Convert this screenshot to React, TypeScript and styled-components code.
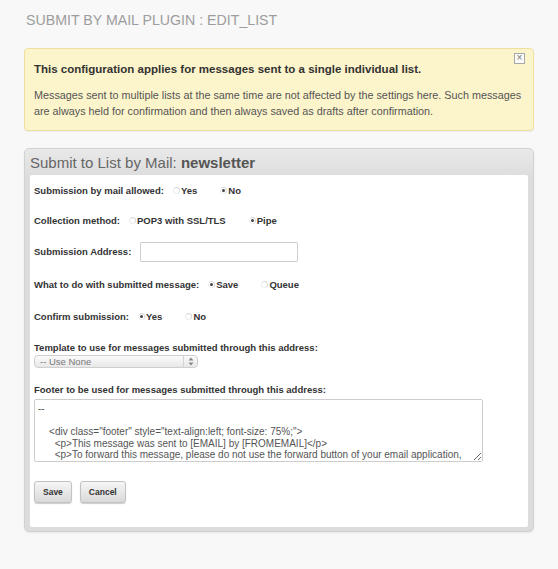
import React from 'react';
import styled, { createGlobalStyle } from 'styled-components';

const GlobalStyle = createGlobalStyle`
  html, body {
    margin: 0;
    padding: 0;
    background: #f8f8f8;
    font-family: "Liberation Sans", Arial, Helvetica, sans-serif;
  }
`;

const footerText = `--

    <div class="footer" style="text-align:left; font-size: 75%;">
      <p>This message was sent to [EMAIL] by [FROMEMAIL]</p>
      <p>To forward this message, please do not use the forward button of your email application,
because this message was made specifically for you only. Instead use the <a href="[FORWARDURL]">forward page</a>
      in our newsletter system.<br/>`;

interface IRadioProps {
  label: string,
  checked?: boolean
}

// Components
const RadioOption: React.FC<IRadioProps> = ({ label, checked }) => (
  <Option>
    <RadioDot checked={!!checked} />
    {label}
  </Option>
);

const App: React.FC = () => {
  return (
    <>
      <GlobalStyle />
      <Page>
        <PageTitle>Submit by mail plugin : edit_list</PageTitle>

        <Notice>
          <CloseButton>×</CloseButton>
          <NoticeTitle>This configuration applies for messages sent to a single individual list.</NoticeTitle>
          <NoticeText>
            Messages sent to multiple lists at the same time are not affected by the settings here. Such messages
            are always held for confirmation and then always saved as drafts after confirmation.
          </NoticeText>
        </Notice>

        <Panel>
          <PanelHeader>
            Submit to List by Mail: <strong>newsletter</strong>
          </PanelHeader>
          <PanelBody>
            <Row>
              <Label>Submission by mail allowed:</Label>
              <RadioOption label="Yes" />
              <RadioOption label="No" checked />
            </Row>
            <Row>
              <Label>Collection method:</Label>
              <RadioOption label="POP3 with SSL/TLS" />
              <RadioOption label="Pipe" checked />
            </Row>
            <Row tall>
              <Label>Submission Address:</Label>
              <TextInput type="text" />
            </Row>
            <Row tall>
              <Label>What to do with submitted message:</Label>
              <RadioOption label="Save" checked />
              <RadioOption label="Queue" />
            </Row>
            <Row>
              <Label>Confirm submission:</Label>
              <RadioOption label="Yes" checked />
              <RadioOption label="No" />
            </Row>

            <Block>
              <Label>Template to use for messages submitted through this address:</Label>
              <Select>
                <span>-- Use None</span>
                <SelectArrows>
                  <svg width="6" height="9" viewBox="0 0 6 9">
                    <path d="M3 0.5 L5.5 3.5 H0.5 Z M3 8.5 L5.5 5.5 H0.5 Z" fill="#888" />
                  </svg>
                </SelectArrows>
              </Select>
            </Block>

            <Block spaced>
              <Label>Footer to be used for messages submitted through this address:</Label>
              <FooterArea readOnly defaultValue={footerText} />
            </Block>

            <Buttons>
              <Button>Save</Button>
              <Button>Cancel</Button>
            </Buttons>
          </PanelBody>
        </Panel>
      </Page>
    </>
  );
};

// Styled Components
const Page = styled.div`
  width: 510px;
  padding: 12px 24px 40px 24px;
`;

const PageTitle = styled.h1`
  margin: 0 0 20px 2px;
  font-size: 14.2px;
  font-weight: normal;
  line-height: 16px;
  color: #9d9d9d;
  text-transform: uppercase;
`;

const Notice = styled.div`
  position: relative;
  box-sizing: border-box;
  height: 83px;
  padding: 13px 8px 0 9px;
  background: #fcf4ca;
  border: 1px solid #efe0a0;
  border-radius: 4px;
  box-shadow: 0 1px 1px rgba(0, 0, 0, 0.05);
`;

const CloseButton = styled.span`
  position: absolute;
  top: 4px;
  right: 8px;
  width: 9px;
  height: 9px;
  border: 1px solid #a8a8a8;
  background: #fbfbfb;
  color: #777;
  font-size: 10px;
  line-height: 8px;
  text-align: center;
`;

const NoticeTitle = styled.div`
  font-size: 11.5px;
  font-weight: bold;
  color: #333;
  line-height: 14px;
  margin-bottom: 11px;
`;

const NoticeText = styled.div`
  font-size: 10.8px;
  color: #555;
  line-height: 16px;
`;

const Panel = styled.div`
  margin-top: 17px;
  padding: 0 5px 4px 5px;
  background: linear-gradient(#e9e9e9, #dcdcdc 30px, #dcdcdc);
  border: 1px solid #d2d2d2;
  border-radius: 5px;
  box-shadow: 0 1px 2px rgba(0, 0, 0, 0.08);
`;

const PanelHeader = styled.div`
  height: 26px;
  font-size: 15px;
  line-height: 28px;
  color: #666;

  strong {
    color: #555;
  }
`;

const PanelBody = styled.div`
  background: #fff;
  border-radius: 2px;
  padding: 0 4px 24px 4px;
`;

const Row = styled.div<{ tall?: boolean }>`
  display: flex;
  align-items: center;
  gap: 7px;
  height: ${({ tall }) => (tall ? '33px' : '30px')};
`;

const Label = styled.span`
  font-size: 9.5px;
  font-weight: bold;
  color: #333;
  margin-right: 2px;
`;

const Option = styled.label`
  display: inline-flex;
  align-items: center;
  gap: 1px;
  margin-right: 16px;
  font-size: 9.5px;
  font-weight: bold;
  color: #333;
`;

const RadioDot = styled.span<{ checked: boolean }>`
  position: relative;
  width: 5px;
  height: 5px;
  border-radius: 50%;
  border: 1px solid #d8d8d8;
  border-left-color: #eee;
  border-bottom-color: #eee;
  &::after {
    content: '';
    display: ${({ checked }) => (checked ? 'block' : 'none')};
    position: absolute;
    top: 1px;
    left: 1px;
    width: 3px;
    height: 3px;
    border-radius: 50%;
    background: #444;
  }
`;

const TextInput = styled.input`
  box-sizing: border-box;
  width: 158px;
  height: 20px;
  border: 1px solid #cfcfcf;
  border-radius: 1px;
  background: #fff;
  outline: none;
`;

const Block = styled.div<{ spaced?: boolean }>`
  display: flex;
  flex-direction: column;
  align-items: flex-start;
  gap: ${({ spaced }) => (spaced ? '4px' : '2px')};
  margin-top: ${({ spaced }) => (spaced ? '16px' : '11px')};
`;

const Select = styled.div`
  box-sizing: border-box;
  display: flex;
  align-items: center;
  justify-content: space-between;
  width: 164px;
  height: 13px;
  padding-left: 5px;
  border: 1px solid #cfcfcf;
  border-radius: 4px;
  background: linear-gradient(#fbfbfb, #e8e8e8);
  font-size: 9.5px;
  color: #777;
`;

const SelectArrows = styled.span`
  display: flex;
  align-items: center;
  justify-content: center;
  width: 13px;
  height: 100%;
  border-left: 1px solid #d4d4d4;
`;

const FooterArea = styled.textarea`
  box-sizing: border-box;
  width: 449px;
  height: 63px;
  margin: 0;
  padding: 3px 3px 0 3px;
  border: 1px solid #cdcdcd;
  border-radius: 2px;
  font-family: "Liberation Sans", Arial, sans-serif;
  font-size: 10px;
  line-height: 11.5px;
  color: #555;
  overflow: hidden;
  resize: vertical;
  white-space: pre;
`;

const Buttons = styled.div`
  display: flex;
  gap: 8px;
  margin-top: 19px;
`;

const Button = styled.button`
  height: 22px;
  padding: 0 8px;
  border: 1px solid #c2c2c2;
  border-radius: 3px;
  background: linear-gradient(#f6f6f6, #d9d9d9);
  box-shadow: 0 1px 1px rgba(0, 0, 0, 0.2);
  font-family: "Liberation Sans", Arial, sans-serif;
  font-size: 8.5px;
  font-weight: bold;
  color: #333;
`;

export default App;
